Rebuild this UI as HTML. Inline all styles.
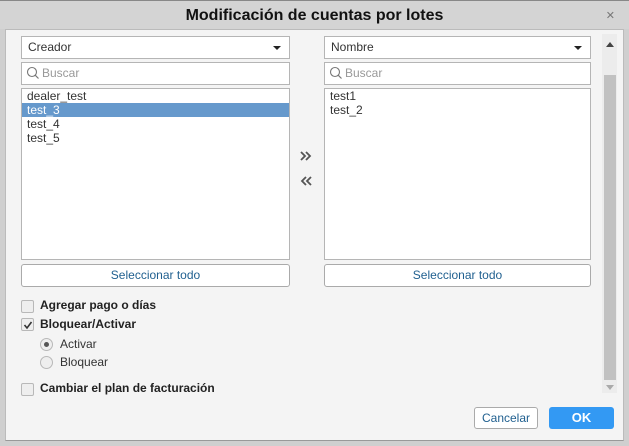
<!DOCTYPE html>
<html><head><style>
*{box-sizing:border-box;margin:0;padding:0}
body{width:629px;height:446px;background:#cfcfcf;font-family:"Liberation Sans",Arial,sans-serif;font-size:12px;color:#333;position:relative;overflow:hidden}
.abs{position:absolute}
.title{left:0;top:0;width:629px;height:29px;background:#d4d4d4;border-top:1px solid #888;text-align:center;font-weight:bold;font-size:16px;line-height:29px;color:#111}
.close{right:14px;top:9px;font-size:11px;color:#777}
.panel{left:5px;top:29px;width:619px;height:412px;background:#f4f4f4;border-top:1px solid #bbb;border-bottom:1px solid #999;border-left:1px solid #bbb;border-right:1px solid #bbb}
.box{background:#fff;border:1px solid #b5b5b5}
.dd{height:23px;line-height:21px;padding-left:6px;color:#333}
.dd:after{content:"";position:absolute;right:8px;top:9px;border-left:4px solid transparent;border-right:4px solid transparent;border-top:4px solid #222}
.srch{height:23px;line-height:21px;padding-left:20px;color:#999}
.list{line-height:14px;padding-top:0}
.list div{padding-left:5px;height:14px}
.sel{background:#6699cc;color:#fff}
.btn{height:23px;border:1px solid #aaa;border-radius:3px;background:#fff;text-align:center;line-height:21px;color:#1f5f8f}
.cb{width:13px;height:13px;border:1px solid #b8b8b8;border-radius:2px;background:#eee}
.rd{width:13px;height:13px;border:1px solid #b8b8b8;border-radius:50%;background:#eee}
.lbl{font-weight:bold;color:#222}
</style></head><body>
<div class="abs title">Modificación de cuentas por lotes</div>
<div class="abs close">✕</div>
<div class="abs panel"></div>

<div class="abs box dd" style="left:21px;top:36px;width:269px">Creador</div>
<div class="abs box srch" style="left:21px;top:62px;width:269px">Buscar</div>
<svg class="abs" style="left:26px;top:66px" width="14" height="14"><circle cx="6" cy="6" r="4.5" fill="none" stroke="#777" stroke-width="1.1"/><line x1="9.3" y1="9.3" x2="12.5" y2="12.5" stroke="#777" stroke-width="1.2"/></svg>
<div class="abs box list" style="left:21px;top:88px;width:269px;height:172px">
<div>dealer_test</div><div class="sel">test_3</div><div>test_4</div><div>test_5</div></div>
<div class="abs btn" style="left:21px;top:264px;width:269px">Seleccionar todo</div>

<div class="abs box dd" style="left:324px;top:36px;width:267px">Nombre</div>
<div class="abs box srch" style="left:324px;top:62px;width:267px">Buscar</div>
<svg class="abs" style="left:329px;top:66px" width="14" height="14"><circle cx="6" cy="6" r="4.5" fill="none" stroke="#777" stroke-width="1.1"/><line x1="9.3" y1="9.3" x2="12.5" y2="12.5" stroke="#777" stroke-width="1.2"/></svg>
<div class="abs box list" style="left:324px;top:88px;width:267px;height:172px"><div>test1</div><div>test_2</div></div>
<div class="abs btn" style="left:324px;top:264px;width:267px">Seleccionar todo</div>

<svg class="abs" style="left:299px;top:150px" width="16" height="40"><path d="M2 2l4 4-4 4M7 2l4 4-4 4" fill="none" stroke="#555" stroke-width="1.8"/><path d="M7 27l-4 4 4 4M12 27l-4 4 4 4" fill="none" stroke="#555" stroke-width="1.8"/></svg>

<div class="abs" style="left:602px;top:34px;width:15px;height:359px;background:#ececec"></div>
<div class="abs" style="left:604px;top:75px;width:12px;height:305px;background:#c1c1c1"></div>
<div class="abs" style="left:606px;top:42px;border-left:4px solid transparent;border-right:4px solid transparent;border-bottom:5px solid #444"></div>
<div class="abs" style="left:606px;top:385px;border-left:4px solid transparent;border-right:4px solid transparent;border-top:5px solid #aaa"></div>

<div class="abs cb" style="left:21px;top:300px"></div><div class="abs lbl" style="left:40px;top:298px">Agregar pago o días</div>
<div class="abs cb" style="left:21px;top:318px"></div><svg class="abs" style="left:23px;top:320px" width="10" height="10"><path d="M1.5 5l2.5 3 4.5-6" fill="none" stroke="#333" stroke-width="1.6"/></svg><div class="abs lbl" style="left:40px;top:317px">Bloquear/Activar</div>
<div class="abs rd" style="left:40px;top:338px"></div><div class="abs" style="left:44px;top:342px;width:5px;height:5px;border-radius:50%;background:#555"></div><div class="abs" style="left:60px;top:337px">Activar</div>
<div class="abs rd" style="left:40px;top:356px"></div><div class="abs" style="left:60px;top:355px">Bloquear</div>
<div class="abs cb" style="left:21px;top:383px"></div><div class="abs lbl" style="left:40px;top:381px">Cambiar el plan de facturación</div>

<div class="abs btn" style="left:474px;top:407px;width:64px;height:22px;line-height:20px">Cancelar</div>
<div class="abs" style="left:549px;top:407px;width:65px;height:22px;background:#3399f3;border-radius:3px;color:#fff;font-weight:bold;font-size:13px;text-align:center;line-height:22px">OK</div>
</body></html>
